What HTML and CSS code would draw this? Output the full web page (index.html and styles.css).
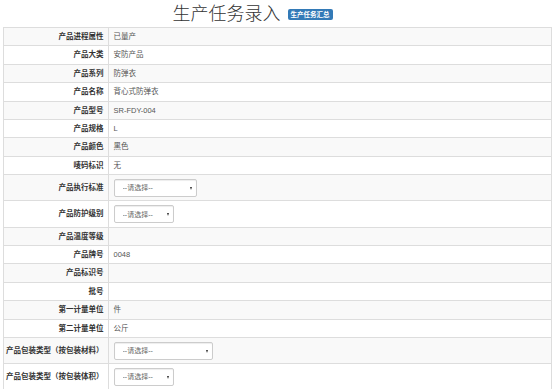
FILE: index.html
```html
<!DOCTYPE html>
<html lang="zh-CN">
  <head>
    <meta charset="UTF-8" />
    <meta name="viewport" content="width=device-width, initial-scale=1.0" />
    <title>生产任务录入</title>
    <link rel="stylesheet" href="styles.css">
  </head>
  <body>
    <div class="page">
      <div class="header">
        <h1 class="title">生产任务录入</h1>
        <a href="#" class="label-badge">生产任务汇总</a>
      </div>

      <table class="task-table">
        <tbody>
          <tr><th>产品进程属性</th><td>已量产</td></tr>
          <tr><th>产品大类</th><td>安防产品</td></tr>
          <tr><th>产品系列</th><td>防弹衣</td></tr>
          <tr><th>产品名称</th><td>背心式防弹衣</td></tr>
          <tr><th>产品型号</th><td>SR-FDY-004</td></tr>
          <tr><th>产品规格</th><td>L</td></tr>
          <tr><th>产品颜色</th><td>黑色</td></tr>
          <tr><th>唛码标识</th><td>无</td></tr>
          <tr class="form-row">
            <th>产品执行标准</th>
            <td><span class="select-box w-md"><select><option>--请选择--</option></select></span></td>
          </tr>
          <tr class="form-row">
            <th>产品防护级别</th>
            <td><span class="select-box w-sm"><select><option>--请选择--</option></select></span></td>
          </tr>
          <tr><th>产品温度等级</th><td></td></tr>
          <tr><th>产品牌号</th><td>0048</td></tr>
          <tr><th>产品标识号</th><td></td></tr>
          <tr><th>批号</th><td></td></tr>
          <tr><th>第一计量单位</th><td>件</td></tr>
          <tr><th>第二计量单位</th><td>公斤</td></tr>
          <tr class="form-row">
            <th>产品包装类型（按包装材料）</th>
            <td><span class="select-box w-lg"><select><option>--请选择--</option></select></span></td>
          </tr>
          <tr class="form-row">
            <th>产品包装类型（按包装体积）</th>
            <td><span class="select-box w-sm"><select><option>--请选择--</option></select></span></td>
          </tr>
        </tbody>
      </table>
    </div>
  </body>
</html>
```

FILE: styles.css
```css
body {
  margin: 0;
  font-family: "Liberation Sans", "Noto Sans CJK SC", sans-serif;
  color: #333;
  background: #fff;
}
.page {
  padding: 0 6px 0 3px;
}
.header {
  display: flex;
  justify-content: center;
  align-items: center;
  height: 23px;
  padding: 0 50px 4px 0;
}
.title {
  margin: 0;
  font-family: "Noto Sans CJK SC", sans-serif;
  font-size: 18px;
  font-weight: 300;
  line-height: 20px;
  color: #333;
}
.label-badge {
  display: inline-block;
  margin: 5px 0 0 7px;
  padding: 0 3px;
  height: 11px;
  line-height: 11px;
  background: #337ab7;
  color: #fff;
  font-family: "Noto Sans CJK SC", sans-serif;
  font-size: 6.5px;
  font-weight: bold;
  text-decoration: none;
  border-radius: 2px;
}
.task-table {
  width: 100%;
  border-collapse: collapse;
  border: 1px solid #ddd;
  font-size: 7.5px;
  line-height: 9.4px;
}
.task-table tr:nth-child(odd) {
  background: #f9f9f9;
}
.task-table th,
.task-table td {
  border: 1px solid #ddd;
  padding: 4px 5px;
  vertical-align: middle;
}
.task-table th {
  width: 97px;
  padding: 4px 4px 4px 2px;
  text-align: right;
  font-weight: bold;
  white-space: nowrap;
  color: #333;
}
.task-table td {
  color: #555;
}
.task-table .form-row th,
.task-table .form-row td {
  padding-top: 3.6px;
  padding-bottom: 3.6px;
}
.select-box {
  position: relative;
  display: inline-block;
  vertical-align: middle;
}
.select-box select {
  display: block;
  width: 100%;
  height: 18px;
  padding: 0 12px 0 8px;
  font-family: "Liberation Sans", "Noto Sans CJK SC", sans-serif;
  font-size: 7px;
  color: #666;
  background: #fff;
  border: 1px solid #ccc;
  border-radius: 2px;
  box-shadow: inset 0 1px 1px rgba(0, 0, 0, 0.075);
  appearance: none;
  -webkit-appearance: none;
  outline: none;
}
.select-box::after {
  content: "";
  position: absolute;
  right: 5px;
  top: 8px;
  border-left: 1.5px solid transparent;
  border-right: 1.5px solid transparent;
  border-top: 3px solid #333;
  pointer-events: none;
}
.w-sm {
  width: 60px;
}
.w-md {
  width: 83px;
}
.w-lg {
  width: 99px;
}
```
